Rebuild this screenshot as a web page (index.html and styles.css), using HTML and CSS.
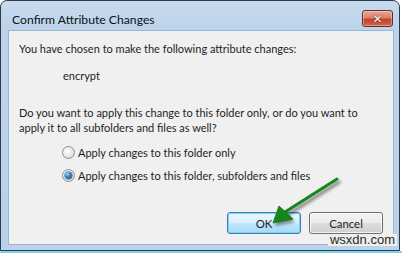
FILE: index.html
```html
<!DOCTYPE html>
<html>
<head>
<meta charset="utf-8">
<link rel="stylesheet" href="styles.css">
</head>
<body>
<div class="screen">
  <div class="window">
    <div class="titlebar">
      <div class="title">Confirm Attribute Changes</div>
      <div class="close"><span>✕</span></div>
    </div>
    <div class="content">
      <p class="line">You have chosen to make the following attribute changes:</p>
      <p class="attr">encrypt</p>
      <p class="question">Do you want to apply this change to this folder only, or do you want to<br>apply it to all subfolders and files as well?</p>
      <div class="options">
        <div class="option"><span class="radio"></span><span>Apply changes to this folder only</span></div>
        <div class="option"><span class="radio checked"></span><span>Apply changes to this folder, subfolders and files</span></div>
      </div>
      <div class="buttons">
        <div class="btn default">OK</div>
        <div class="btn">Cancel</div>
      </div>
    </div>
    <svg class="arrow" width="400" height="251" viewBox="0 0 400 251">
      <defs>
        <filter id="blur" x="-20%" y="-20%" width="140%" height="140%"><feGaussianBlur stdDeviation="1.6"/></filter>
      </defs>
      <g filter="url(#blur)" opacity="0.55" transform="translate(2 3)">
        <line x1="337" y1="179" x2="285" y2="212" stroke="#333" stroke-width="3.5" stroke-linecap="round"/>
        <polygon points="273,223 279,206 293,219" fill="#333"/>
      </g>
      <line x1="337" y1="179" x2="285" y2="212" stroke="#15871a" stroke-width="3" stroke-linecap="round"/>
      <polygon points="273,223 279,206 293,219" fill="#15871a" stroke="#0f6e12" stroke-width="0.8" stroke-linejoin="round"/>
    </svg>
    <div class="watermark">wsxdn.com</div>
  </div>
  <div class="strip"></div>
</div>
</body>
</html>
```

FILE: styles.css
```css
html, body {
  margin: 0;
  padding: 0;
  background: #ffffff;
}
.screen {
  width: 402px;
  height: 253px;
  overflow: hidden;
}
.window {
  position: relative;
  box-sizing: border-box;
  width: 400px;
  height: 251px;
  border: 1px solid #2f3b47;
  border-radius: 7px 7px 0 0;
  background: linear-gradient(#c8dbef 0px, #bcd3eb 28px, #b9d1ea 100%);
  display: flex;
  flex-direction: column;
  font-family: Lato, "Open Sans", sans-serif;
  color: #1e1e1e;
}
.titlebar {
  height: 29px;
  display: flex;
  align-items: flex-start;
  padding-left: 11px;
}
.title {
  margin-top: 10px;
  font-size: 12.2px;
  line-height: 17px;
  color: #111;
  white-space: nowrap;
}
.close {
  margin-left: auto;
  margin-top: 9px;
  margin-right: 6px;
  width: 31px;
  height: 17px;
  box-sizing: border-box;
  border: 1px solid #6e2a22;
  border-radius: 3px;
  background: linear-gradient(#e9a596 0%, #d9826f 45%, #c0432c 55%, #d0664e 100%);
  box-shadow: inset 0 0 0 1px rgba(255,255,255,0.35);
  display: flex;
  align-items: center;
  justify-content: center;
}
.close span {
  font-family: "DejaVu Sans", sans-serif;
  font-size: 12px;
  font-weight: bold;
  color: #fff;
  line-height: 12px;
  text-shadow: 0 0 1px #5a1a12, 0 0 1px #5a1a12;
}
.content {
  flex: 1;
  margin: 0 5px 5px 7px;
  background: #f0f0f0;
  border: 1px solid #9fb5cc;
  display: flex;
  flex-direction: column;
  padding: 10px 10px 10px 10px;
  font-size: 11px;
  line-height: 15px;
  white-space: nowrap;
}
.content p {
  margin: 0;
}
.attr {
  margin-top: 12px !important;
  padding-left: 44px;
}
.question {
  margin-top: 22px !important;
}
.options {
  margin-top: 9px;
  padding-left: 43px;
  display: flex;
  flex-direction: column;
  gap: 7px;
}
.option {
  display: flex;
  align-items: center;
  gap: 3px;
  height: 16px;
}
.radio {
  width: 13px;
  height: 13px;
  box-sizing: border-box;
  border-radius: 50%;
  border: 1px solid #8e8f8f;
  background: radial-gradient(circle at 40% 35%, #ffffff 0%, #e6e6e6 55%, #cfcfcf 100%);
  display: flex;
  align-items: center;
  justify-content: center;
}
.radio.checked::after {
  content: "";
  width: 7px;
  height: 7px;
  border-radius: 50%;
  background: radial-gradient(circle at 35% 30%, #9fd4f7 0%, #2f7fc0 45%, #174e86 100%);
  box-shadow: 0 0 0 0.5px #1c4f7a;
}
.buttons {
  margin-top: auto;
  display: flex;
  justify-content: flex-end;
  gap: 8px;
  padding-right: 0;
}
.btn {
  width: 74px;
  height: 22px;
  box-sizing: border-box;
  border: 1px solid #707070;
  border-radius: 3px;
  background: linear-gradient(#f2f2f2 0%, #ebebeb 48%, #dddddd 52%, #cfcfcf 100%);
  box-shadow: inset 0 0 0 1px rgba(255,255,255,0.7);
  display: flex;
  align-items: center;
  justify-content: center;
  font-size: 11.4px;
}
.btn.default {
  border-color: #3c7fb1;
  background: linear-gradient(#eaf6fd 0%, #d9f0fc 48%, #bee6fd 52%, #a7d9f5 100%);
  box-shadow: inset 0 0 0 1px #7fd0f5;
}
.arrow {
  position: absolute;
  left: -1px;
  top: -1px;
  pointer-events: none;
}
.watermark {
  position: absolute;
  right: 2px;
  bottom: 4px;
  padding: 0 2px;
  background: #eeeeee;
  font-family: "Liberation Sans", Arial, sans-serif;
  font-size: 13px;
  line-height: 12px;
  color: #2a2a2a;
}
.strip {
  height: 2px;
  background: #7ad3ef;
}
```
